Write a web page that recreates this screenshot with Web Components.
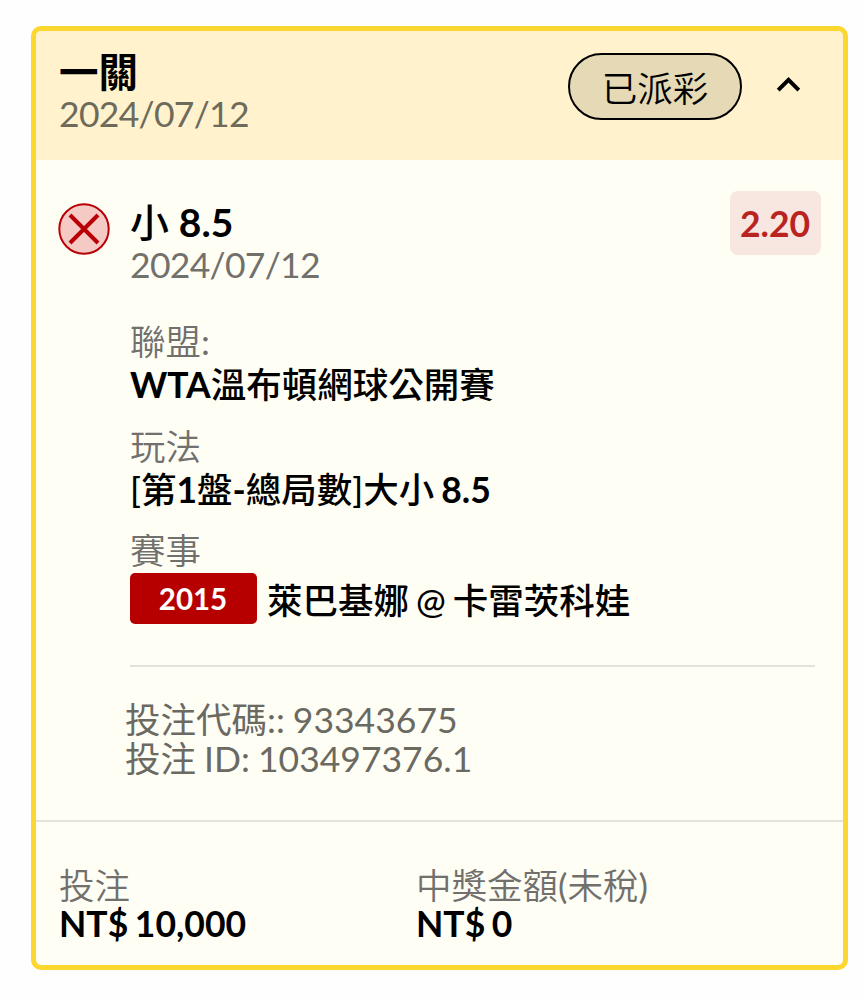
<!DOCTYPE html>
<html lang="zh-Hant">
<head>
<meta charset="utf-8">
<title>投注紀錄</title>
<style>
    body {
        margin: 0;
        background: #fefefe;
        font-family: Lato, "Noto Sans CJK TC", sans-serif;
        font-size: 35.5px;
        line-height: 42px;
        color: #000;
    }
</style>
</head>
<body>
<bet-card>
    <bet-header slot="header" date="2024/07/12" status="已派彩">一關</bet-header>
    <bet-selection odds="2.20" date="2024/07/12">
        <span slot="title">小 <b>8.5</b></span>
        <bet-field label="聯盟:"><b>WTA</b>溫布頓網球公開賽</bet-field>
        <bet-field label="玩法">[第<b>1</b>盤<b>-</b>總局數]大小 <b>8.5</b></bet-field>
        <bet-field label="賽事"><match-code slot="code">2015</match-code>萊巴基娜 @ 卡雷茨科娃</bet-field>
    </bet-selection>
    <bet-reference>
        <div>投注代碼:: 93343675</div>
        <div>投注 ID: 103497376.1</div>
    </bet-reference>
    <bet-amount slot="footer" label="投注">NT$ 10,000</bet-amount>
    <bet-amount slot="footer" label="中獎金額(未稅)">NT$ 0</bet-amount>
</bet-card>

<script>
// attach an open shadow root with the given markup
function render(el, html) {
    const template = document.createElement('template');
    template.innerHTML = html;
    el.attachShadow({mode: 'open'}).appendChild(template.content.cloneNode(true));
}

// labels are light, but their punctuation stays regular
function labelHtml(label) {
    return label.replace(/[:()]/g, '<span>$&</span>');
}

class BetCard extends HTMLElement {
    constructor() {
        super();
        render(this, `
            <style>
                :host {
                    display: flex;
                    flex-direction: column;
                    box-sizing: border-box;
                    width: 817px;
                    height: 944px;
                    margin: 26px 0 0 31px;
                    border: 5px solid #fcd72f;
                    border-radius: 10px;
                    background: #fffef5;
                    overflow: hidden;
                }
                main { height: 660px; }
                footer {
                    display: grid;
                    grid-template-columns: 357px 1fr;
                    flex: 1;
                    padding: 45px 24px 0 23px;
                    border-top: 2px solid #e5e1dc;
                }
            </style>
            <slot name="header"></slot>
            <main><slot></slot></main>
            <footer><slot name="footer"></slot></footer>
        `);
    }
}

class BetHeader extends HTMLElement {
    constructor() {
        super();
        render(this, `
            <style>
                :host {
                    display: flex;
                    flex: none;
                    box-sizing: border-box;
                    height: 129px;
                    padding: 22px 42px 0 23px;
                    background: #fff2cc;
                }
                .text { flex: 1; }
                .title {
                    font-size: 39.5px;
                    font-weight: 700;
                    line-height: 38px;
                }
                .date {
                    color: #6e6a5b;
                    letter-spacing: -0.7px;
                    line-height: 46px;
                }
                .status {
                    box-sizing: border-box;
                    width: 174px;
                    height: 67px;
                    margin: 0 34px 0 0;
                    border: 2.5px solid #000;
                    border-radius: 34px;
                    background: #e5dab5;
                    font-weight: 350;
                    line-height: 67px;
                    text-align: center;
                }
                svg { margin-top: 22px; }
            </style>
            <div class="text">
                <div class="title"><slot></slot></div>
                <div class="date"></div>
            </div>
            <div class="status"></div>
            <svg width="25" height="20" viewBox="0 0 25 20" fill="none" stroke="#000" stroke-width="4">
                <path d="M2.2 15.2 12.5 4.8 22.8 15.2"/>
            </svg>
        `);
        this.shadowRoot.querySelector('.date').textContent = this.getAttribute('date');
        this.shadowRoot.querySelector('.status').textContent = this.getAttribute('status');
    }
}

class BetSelection extends HTMLElement {
    constructor() {
        super();
        render(this, `
            <style>
                :host { display: block; padding: 31px 22px 0 22px; }
                .top { display: flex; }
                svg { margin: 12px 20px 0 0; }
                .text { flex: 1; padding-top: 11px; }
                .title {
                    font-size: 39px;
                    font-weight: 500;
                    line-height: 41px;
                }
                .date {
                    color: #71706c;
                    letter-spacing: -0.7px;
                    line-height: 43px;
                }
                .odds {
                    width: 91px;
                    height: 64px;
                    border-radius: 8px;
                    background: #f8e6e0;
                    color: #b92420;
                    font-weight: 700;
                    line-height: 65px;
                    text-align: center;
                    text-indent: -1px;
                }
                .fields {
                    margin: 34px 6px 0 72px;
                    padding-bottom: 41px;
                    border-bottom: 2px solid #e5e1dc;
                }
            </style>
            <div class="top">
                <svg width="52" height="52" viewBox="0 0 52 52" fill="none" stroke="#b90006">
                    <circle cx="26" cy="26" r="24.7" fill="#f5c9c4" stroke-width="2"/>
                    <path d="M12 12 40 40M40 12 12 40" stroke-width="4"/>
                </svg>
                <div class="text">
                    <div class="title"><slot name="title"></slot></div>
                    <div class="date"></div>
                </div>
                <div class="odds"></div>
            </div>
            <div class="fields"><slot></slot></div>
        `);
        this.shadowRoot.querySelector('.date').textContent = this.getAttribute('date');
        this.shadowRoot.querySelector('.odds').textContent = this.getAttribute('odds');
    }
}

class BetField extends HTMLElement {
    constructor() {
        super();
        render(this, `
            <style>
                :host { display: block; margin-bottom: 18.5px; }
                :host(:last-child) { margin-bottom: 0; }
                .label { color: #71706c; font-weight: 350; line-height: 44px; }
                .label span { font-weight: 400; }
                .value {
                    display: flex;
                    align-items: center;
                    font-weight: 500;
                    line-height: 42px;
                    word-spacing: -2px;
                }
                /* the text sits a little lower beside a match code */
                slot[name="code"]::slotted(*) { margin-right: 10px; }
                :host([label="賽事"]) .text { padding-top: 5px; }
            </style>
            <div class="label"></div>
            <div class="value"><slot name="code"></slot><span class="text"><slot></slot></span></div>
        `);
        this.shadowRoot.querySelector('.label').innerHTML = labelHtml(this.getAttribute('label'));
    }
}

class MatchCode extends HTMLElement {
    constructor() {
        super();
        render(this, `
            <style>
                :host {
                    display: block;
                    width: 127px;
                    height: 51px;
                    border-radius: 5px;
                    background: #b60000;
                    color: #fff;
                    font-size: 29.5px;
                    font-weight: 700;
                    line-height: 52px;
                    text-align: center;
                    text-indent: -1px;
                }
            </style>
            <slot></slot>
        `);
    }
}

class BetReference extends HTMLElement {
    constructor() {
        super();
        render(this, `
            <style>
                :host {
                    display: block;
                    padding: 34px 0 0 89px;
                    color: #6a6962;
                    line-height: 38.5px;
                    word-spacing: -1px;
                }
            </style>
            <slot></slot>
        `);
    }
}

class BetAmount extends HTMLElement {
    constructor() {
        super();
        render(this, `
            <style>
                :host { display: block; line-height: 38px; }
                .label { color: #71706c; font-weight: 350; }
                .label span { font-weight: 400; }
                .value { font-weight: 700; word-spacing: -2px; }
            </style>
            <div class="label"></div>
            <div class="value"><slot></slot></div>
        `);
        this.shadowRoot.querySelector('.label').innerHTML = labelHtml(this.getAttribute('label'));
    }
}

customElements.define('bet-card', BetCard);
customElements.define('bet-header', BetHeader);
customElements.define('bet-selection', BetSelection);
customElements.define('bet-field', BetField);
customElements.define('match-code', MatchCode);
customElements.define('bet-reference', BetReference);
customElements.define('bet-amount', BetAmount);
</script>
</body>
</html>
